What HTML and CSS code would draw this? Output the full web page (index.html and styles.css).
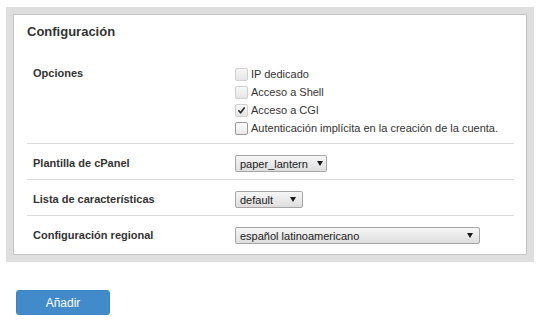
FILE: index.html
```html
<!DOCTYPE html>
<html lang="es">
<head>
<meta charset="utf-8">
<title>Configuración</title>
<link rel="stylesheet" href="styles.css">
</head>
<body>
<div class="page">
  <section class="panel">
    <div class="panel-inner">
      <h2 class="title">Configuración</h2>
      <div class="rows">
        <div class="row">
          <div class="label">Opciones</div>
          <div class="field">
            <ul class="checks">
              <li class="check"><span class="box disabled"></span><span>IP dedicado</span></li>
              <li class="check"><span class="box disabled"></span><span>Acceso a Shell</span></li>
              <li class="check"><span class="box disabled"><svg width="9" height="9" viewBox="0 0 9 9"><path d="M1.8 4.8 L3.6 6.8 L7.2 2" fill="none" stroke="#2a2a2a" stroke-width="1.7" stroke-linecap="round" stroke-linejoin="round"/></svg></span><span>Acceso a CGI</span></li>
              <li class="check"><span class="box"></span><span>Autenticación implícita en la creación de la cuenta.</span></li>
            </ul>
          </div>
        </div>
        <div class="row">
          <div class="label">Plantilla de cPanel</div>
          <div class="field">
            <div class="select sel-theme"><span class="sel-text">paper_lantern</span><svg class="arrow" width="6" height="5" viewBox="0 0 6 5"><path d="M0 0 H6 L3 5 Z" fill="#1a1a1a"/></svg></div>
          </div>
        </div>
        <div class="row">
          <div class="label">Lista de características</div>
          <div class="field">
            <div class="select sel-feat"><span class="sel-text">default</span><svg class="arrow" width="6" height="5" viewBox="0 0 6 5"><path d="M0 0 H6 L3 5 Z" fill="#1a1a1a"/></svg></div>
          </div>
        </div>
        <div class="row">
          <div class="label">Configuración regional</div>
          <div class="field">
            <div class="select sel-locale"><span class="sel-text">español latinoamericano</span><svg class="arrow" width="6" height="5" viewBox="0 0 6 5"><path d="M0 0 H6 L3 5 Z" fill="#1a1a1a"/></svg></div>
          </div>
        </div>
      </div>
    </div>
  </section>
  <button class="btn" type="button">Añadir</button>
</div>
</body>
</html>
```
FILE: styles.css
```css
* { box-sizing: border-box; }
body {
  margin: 0;
  background: #fff;
  color: #333;
  font-family: "Liberation Sans", Arial, sans-serif;
}
.page {
  padding: 7px 0 0 6px;
}
.panel {
  width: 528px;
  padding: 7px;
  background: #dedede;
}
.panel-inner {
  background: #fff;
  border: 1px solid #c4c4c4;
  padding: 9px 12px 3px 13px;
}
.title {
  margin: 0 0 14px;
  font-size: 13px;
  line-height: 16px;
  font-weight: bold;
  color: #333;
}
.row {
  display: grid;
  grid-template-columns: 208px 1fr;
  padding: 11px 0 7px;
  border-top: 1px solid #dadada;
}
.row:first-child {
  border-top: 0;
  padding-bottom: 6px;
}
.label {
  padding-left: 6px;
  font-size: 11px;
  font-weight: bold;
  line-height: 17px;
  color: #333;
}
.checks {
  list-style: none;
  margin: 0;
  padding: 0;
}
.check {
  display: flex;
  align-items: center;
  gap: 3px;
  height: 18px;
  font-size: 11px;
  color: #333;
}
.box {
  width: 13px;
  height: 13px;
  border: 1px solid #9a9a9a;
  border-radius: 2px;
  background: linear-gradient(#ffffff, #e9e9e9);
  display: flex;
  align-items: center;
  justify-content: center;
  flex: none;
}
.box.disabled {
  border-color: #d0d0d0;
  background: linear-gradient(#f7f7f7, #e6e6e6);
}
.select {
  display: flex;
  align-items: center;
  height: 17px;
  padding: 0 6px 0 4px;
  border: 1px solid #a6a6a6;
  border-radius: 2px;
  background: linear-gradient(#f6f6f6, #dedede);
  font-size: 11px;
  color: #222;
}
.sel-text {
  flex: 1;
  white-space: nowrap;
}
.arrow {
  flex: none;
}
.sel-theme { width: 92px; padding-right: 3px; }
.sel-feat { width: 68px; }
.sel-locale { width: 245px; }
.btn {
  display: block;
  margin: 28px 0 0 10px;
  width: 94px;
  height: 25px;
  padding: 0;
  border: 1px solid #3a84c4;
  border-radius: 3px;
  background: #428bca;
  color: #fff;
  font-family: "Liberation Sans", Arial, sans-serif;
  font-size: 12px;
}
```
